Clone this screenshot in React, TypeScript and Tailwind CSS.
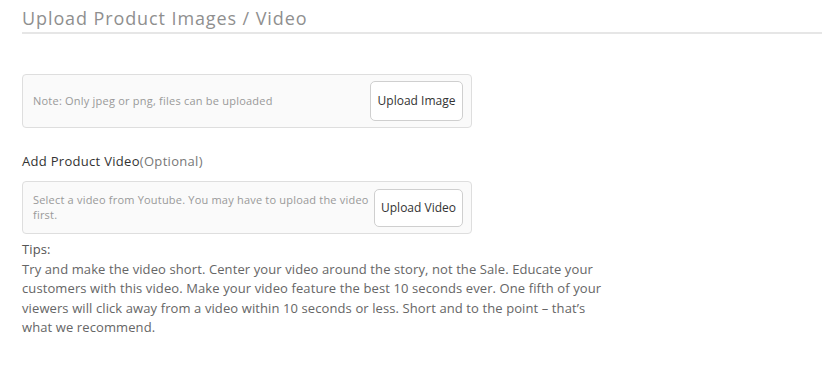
export default function App() {
  const font = { fontFamily: '"Open Sans", "Liberation Sans", sans-serif' };
  return (
    <div className="w-[822px] h-[376px] bg-white pl-[22px]" style={font}>
      <div className="pt-[7px]">
        <h1 className="text-[18px] leading-[22px] tracking-[0.9px] text-[#8f8f8f] font-normal">Upload Product Images / Video</h1>
        <div className="mt-[3px] h-[2px] bg-[#e6e6e6]" />
      </div>
      <div className="mt-[40px] w-[450px] h-[54px] rounded-[4px] border border-[#dedede] bg-[#fafafa] flex items-center justify-between pl-[10px] pr-[8px]">
        <span className="text-[11px] tracking-[0.22px] text-[#999]">Note: Only jpeg or png, files can be uploaded</span>
        <button className="w-[93px] h-[40px] rounded-[5px] border border-[#cfcfcf] bg-white text-[12px] text-[#333]">Upload Image</button>
      </div>
      <div className="mt-[25px] text-[13px] leading-[16px] tracking-[0.3px] text-[#333]">
        Add Product Video<span className="text-[#777]">(Optional)</span>
      </div>
      <div className="mt-[12px] w-[450px] h-[53px] rounded-[4px] border border-[#dedede] bg-[#fafafa] flex items-center justify-between pl-[10px] pr-[8px]">
        <span className="w-[340px] -mt-[2px] text-[11px] leading-[15px] tracking-[0.2px] text-[#999]">Select a video from Youtube. You may have to upload the video first.</span>
        <button className="w-[89px] h-[38px] rounded-[5px] border border-[#cfcfcf] bg-white text-[12px] text-[#333]">Upload Video</button>
      </div>
      <div className="mt-[6px] w-[590px] text-[13px] leading-[19.5px] tracking-[0.1px] text-[#666]">
        <div className="text-[#555]">Tips:</div>
        <p>Try and make the video short. Center your video around the story, not the Sale. Educate your customers with this video. Make your video feature the best 10 seconds ever. One fifth of your viewers will click away from a video within 10 seconds or less. Short and to the point – that’s what we recommend.</p>
      </div>
    </div>
  );
}
